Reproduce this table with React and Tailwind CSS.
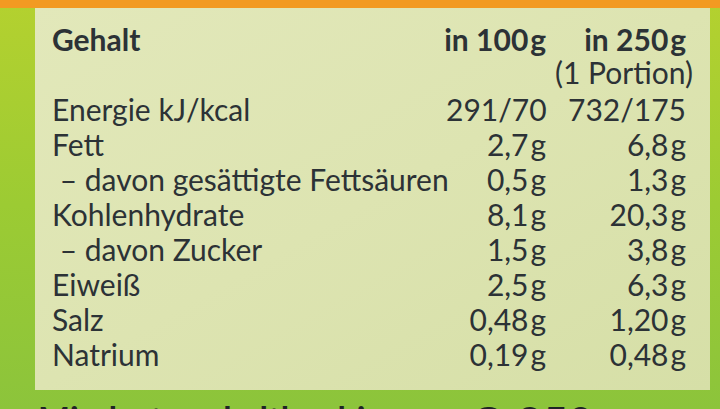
import React from "react";

const rows = [
  ["Energie kJ/kcal", "291/70", "732/175"],
  ["Fett", "2,7\u200ag", "6,8\u200ag"],
  ["\u00a0– davon gesättigte Fettsäuren", "0,5\u200ag", "1,3\u200ag"],
  ["Kohlenhydrate", "8,1\u200ag", "20,3\u200ag"],
  ["\u00a0– davon Zucker", "1,5\u200ag", "3,8\u200ag"],
  ["Eiweiß", "2,5\u200ag", "6,3\u200ag"],
  ["Salz", "0,48\u200ag", "1,20\u200ag"],
  ["Natrium", "0,19\u200ag", "0,48\u200ag"],
];

export default function App() {
  return (
    <div
      className="w-[720px] h-[409px] overflow-hidden flex flex-col bg-gradient-to-b from-[#b4d12f] via-[#9ccb33] to-[#8cc43b] text-[#2c3236]"
      style={{ fontFamily: "Lato, 'Noto Sans', sans-serif" }}
    >
      <div className="h-[8px] shrink-0 bg-[#f29a22]" />
      <div className="ml-[35px] mr-[10px] h-[382px] shrink-0 bg-gradient-to-br from-[#e2e8ba] via-[#dde4b1] to-[#d6dfa7] pl-[17px] pr-[24px] pt-[15px] text-[30px] leading-[35px]">
        <div className="flex h-[33px] items-center font-bold">
          <div className="flex-1">Gehalt</div>
          <div className="w-[130px] text-right">in 100&#8202;g</div>
          <div className="w-[140px] text-right">in 250&#8202;g</div>
        </div>
        <div className="flex h-[33px] items-center">
          <div className="flex-1" />
          <div className="w-[160px] text-right mr-[-7px]">(1 Portion)</div>
        </div>
        <div className="h-[3px]" />
        {rows.map(([l, a, b]) => (
          <div key={l} className="flex h-[35px] items-center whitespace-nowrap">
            <div className="flex-1 min-w-0">{l}</div>
            <div className="w-[100px] text-right">{a}</div>
            <div className="w-[140px] text-right">{b}</div>
          </div>
        ))}
      </div>
      <div className="flex items-start pt-[12px] pl-[38px] whitespace-nowrap text-[#1e2326]">
        <div className="text-[34px] leading-[34px] font-bold w-[432px]">Mindestens haltbar bis:</div>
        <div className="text-[44px] leading-[40px] font-bold">℮ 250&#8202;g</div>
      </div>
    </div>
  );
}
